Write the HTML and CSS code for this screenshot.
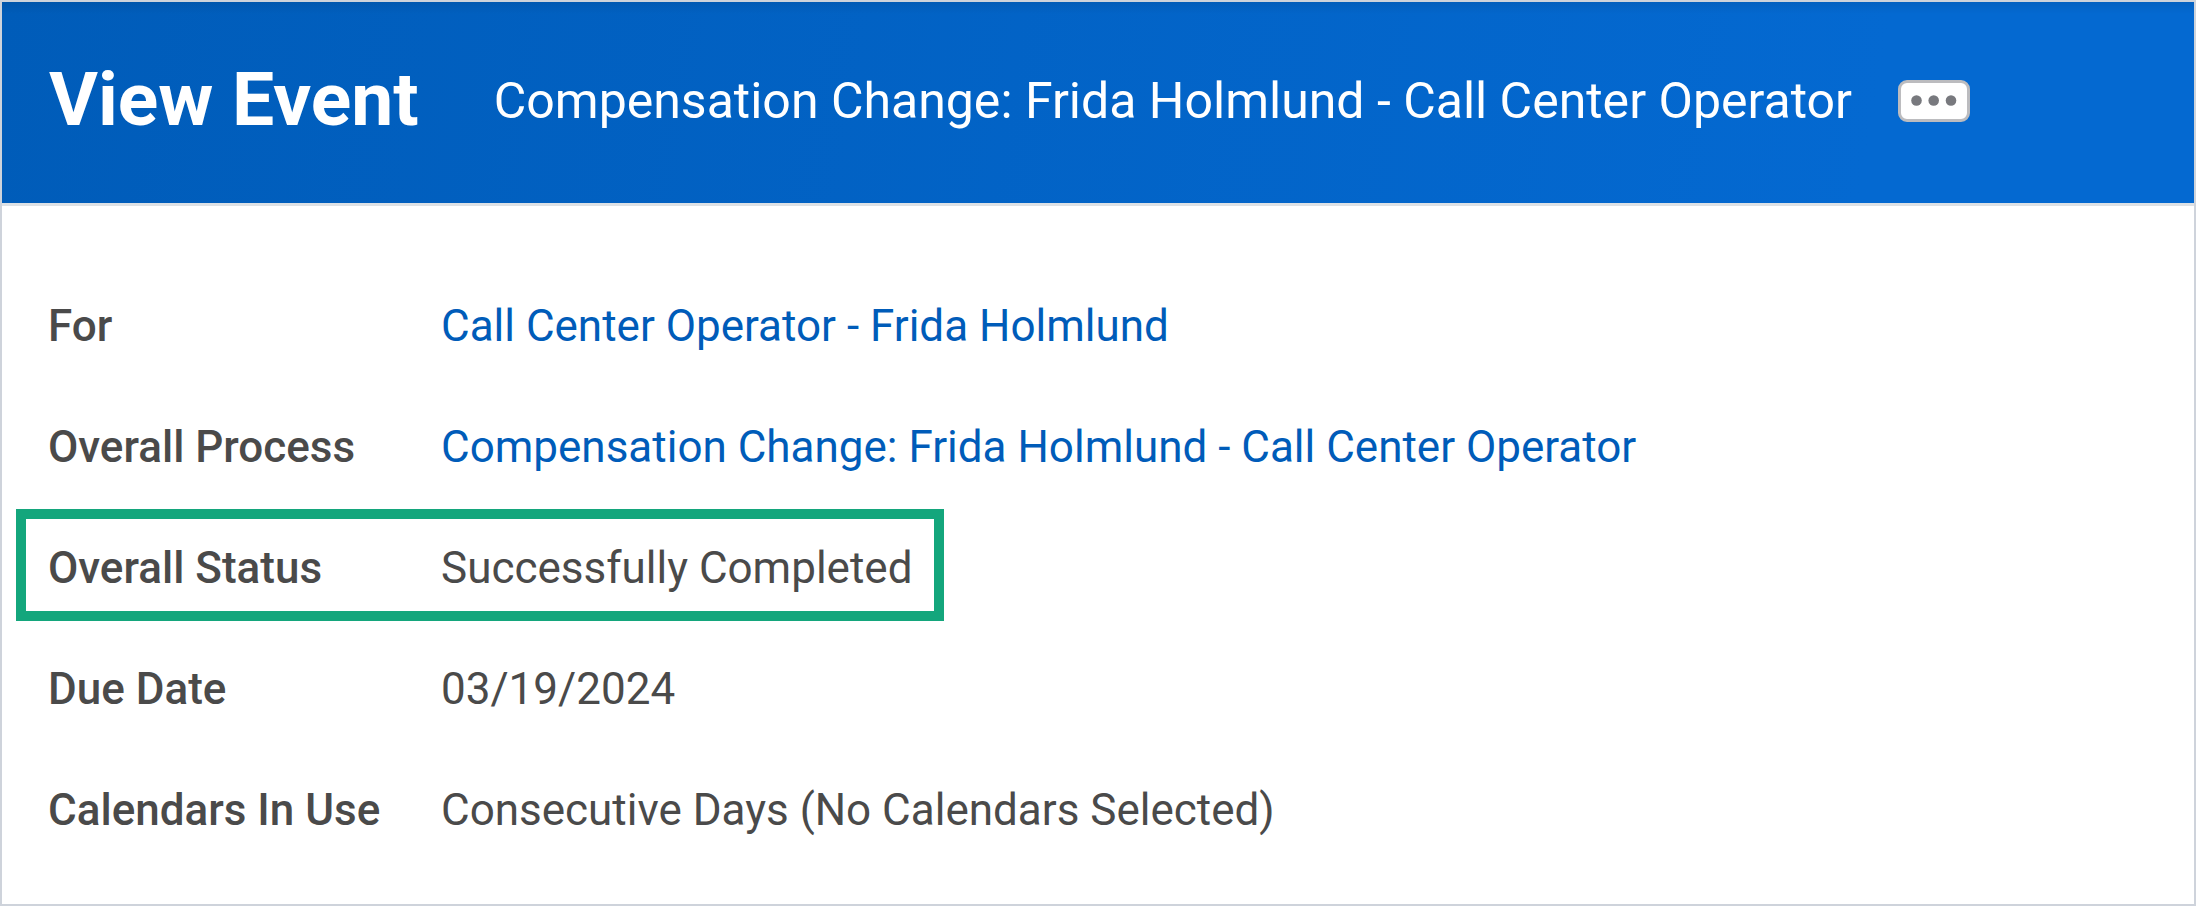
FILE: index.html
```html
<!DOCTYPE html>
<html lang="en">
<head>
<meta charset="utf-8">
<title>View Event</title>
<link rel="stylesheet" href="styles.css">
</head>
<body>
<main class="panel">
  <header class="header">
    <h1 class="title">View Event</h1>
    <div class="subject">
      <p class="subtitle">Compensation Change: Frida Holmlund - Call Center Operator</p>
      <button class="more" type="button" aria-label="Related actions">
        <svg class="dots" viewBox="0 0 46 12" aria-hidden="true"><circle cx="5.5" cy="5.5" r="5.3"/><circle cx="22.7" cy="5.5" r="5.3"/><circle cx="40" cy="5.5" r="5.3"/></svg>
      </button>
    </div>
  </header>
  <dl class="details">
    <div class="row"><dt class="label">For</dt><dd class="value"><a class="link" href="#worker">Call Center Operator - Frida Holmlund</a></dd></div>
    <div class="row"><dt class="label">Overall Process</dt><dd class="value"><a class="link" href="#process">Compensation Change: Frida Holmlund - Call Center Operator</a></dd></div>
    <div class="row row-highlight"><dt class="label">Overall Status</dt><dd class="value">Successfully Completed</dd></div>
    <div class="row"><dt class="label">Due Date</dt><dd class="value">03/19/2024</dd></div>
    <div class="row"><dt class="label">Calendars In Use</dt><dd class="value">Consecutive Days (No Calendars Selected)</dd></div>
  </dl>
</main>
</body>
</html>
```

FILE: styles.css
```css
* {
  box-sizing: border-box;
}

body {
  margin: 0;
  background: #fff;
  color: #4a4a4a;
  font-family: Roboto, "Liberation Sans", sans-serif;
}

.panel {
  min-height: 100vh;
  border: 2px solid #ced3db;
}

.header {
  display: flex;
  align-items: center;
  padding: 53px 47px 60px;
  border-bottom: 3px solid #dde1e5;
  background:
    linear-gradient(rgba(0, 0, 0, 0.08), rgba(0, 0, 0, 0) 12px),
    linear-gradient(100deg, #005cb9, #0469d1 85%);
  color: #fff;
}

.title {
  margin: 0 75px 0 0;
  font-size: 75px;
  line-height: 88px;
  font-weight: 700;
}

.subject {
  display: flex;
  align-items: center;
  gap: 46px;
  margin-top: 4px;
}

.subtitle {
  margin: 0;
  font-size: 50px;
  line-height: 60px;
}

.more {
  display: flex;
  align-items: center;
  justify-content: center;
  width: 72px;
  height: 42px;
  padding: 0;
  border: 3px solid #bcbcbf;
  border-radius: 9px;
  background: #fff;
}

.dots {
  width: 46px;
  height: 12px;
  fill: #78797e;
}

.details {
  margin: 0;
  padding: 61px 14px 0;
}

.row {
  display: flex;
  align-items: center;
  width: fit-content;
  height: 112px;
  margin: 0 0 9px;
  padding: 6px 32px 0;
  font-size: 44px;
  line-height: 56px;
}

.row-highlight {
  outline: 10px solid #14a67c;
  outline-offset: -10px;
}

.label {
  width: 393px;
  font-weight: 500;
}

.value {
  margin: 0;
}

.link {
  color: #005cb9;
  text-decoration: none;
}
```
